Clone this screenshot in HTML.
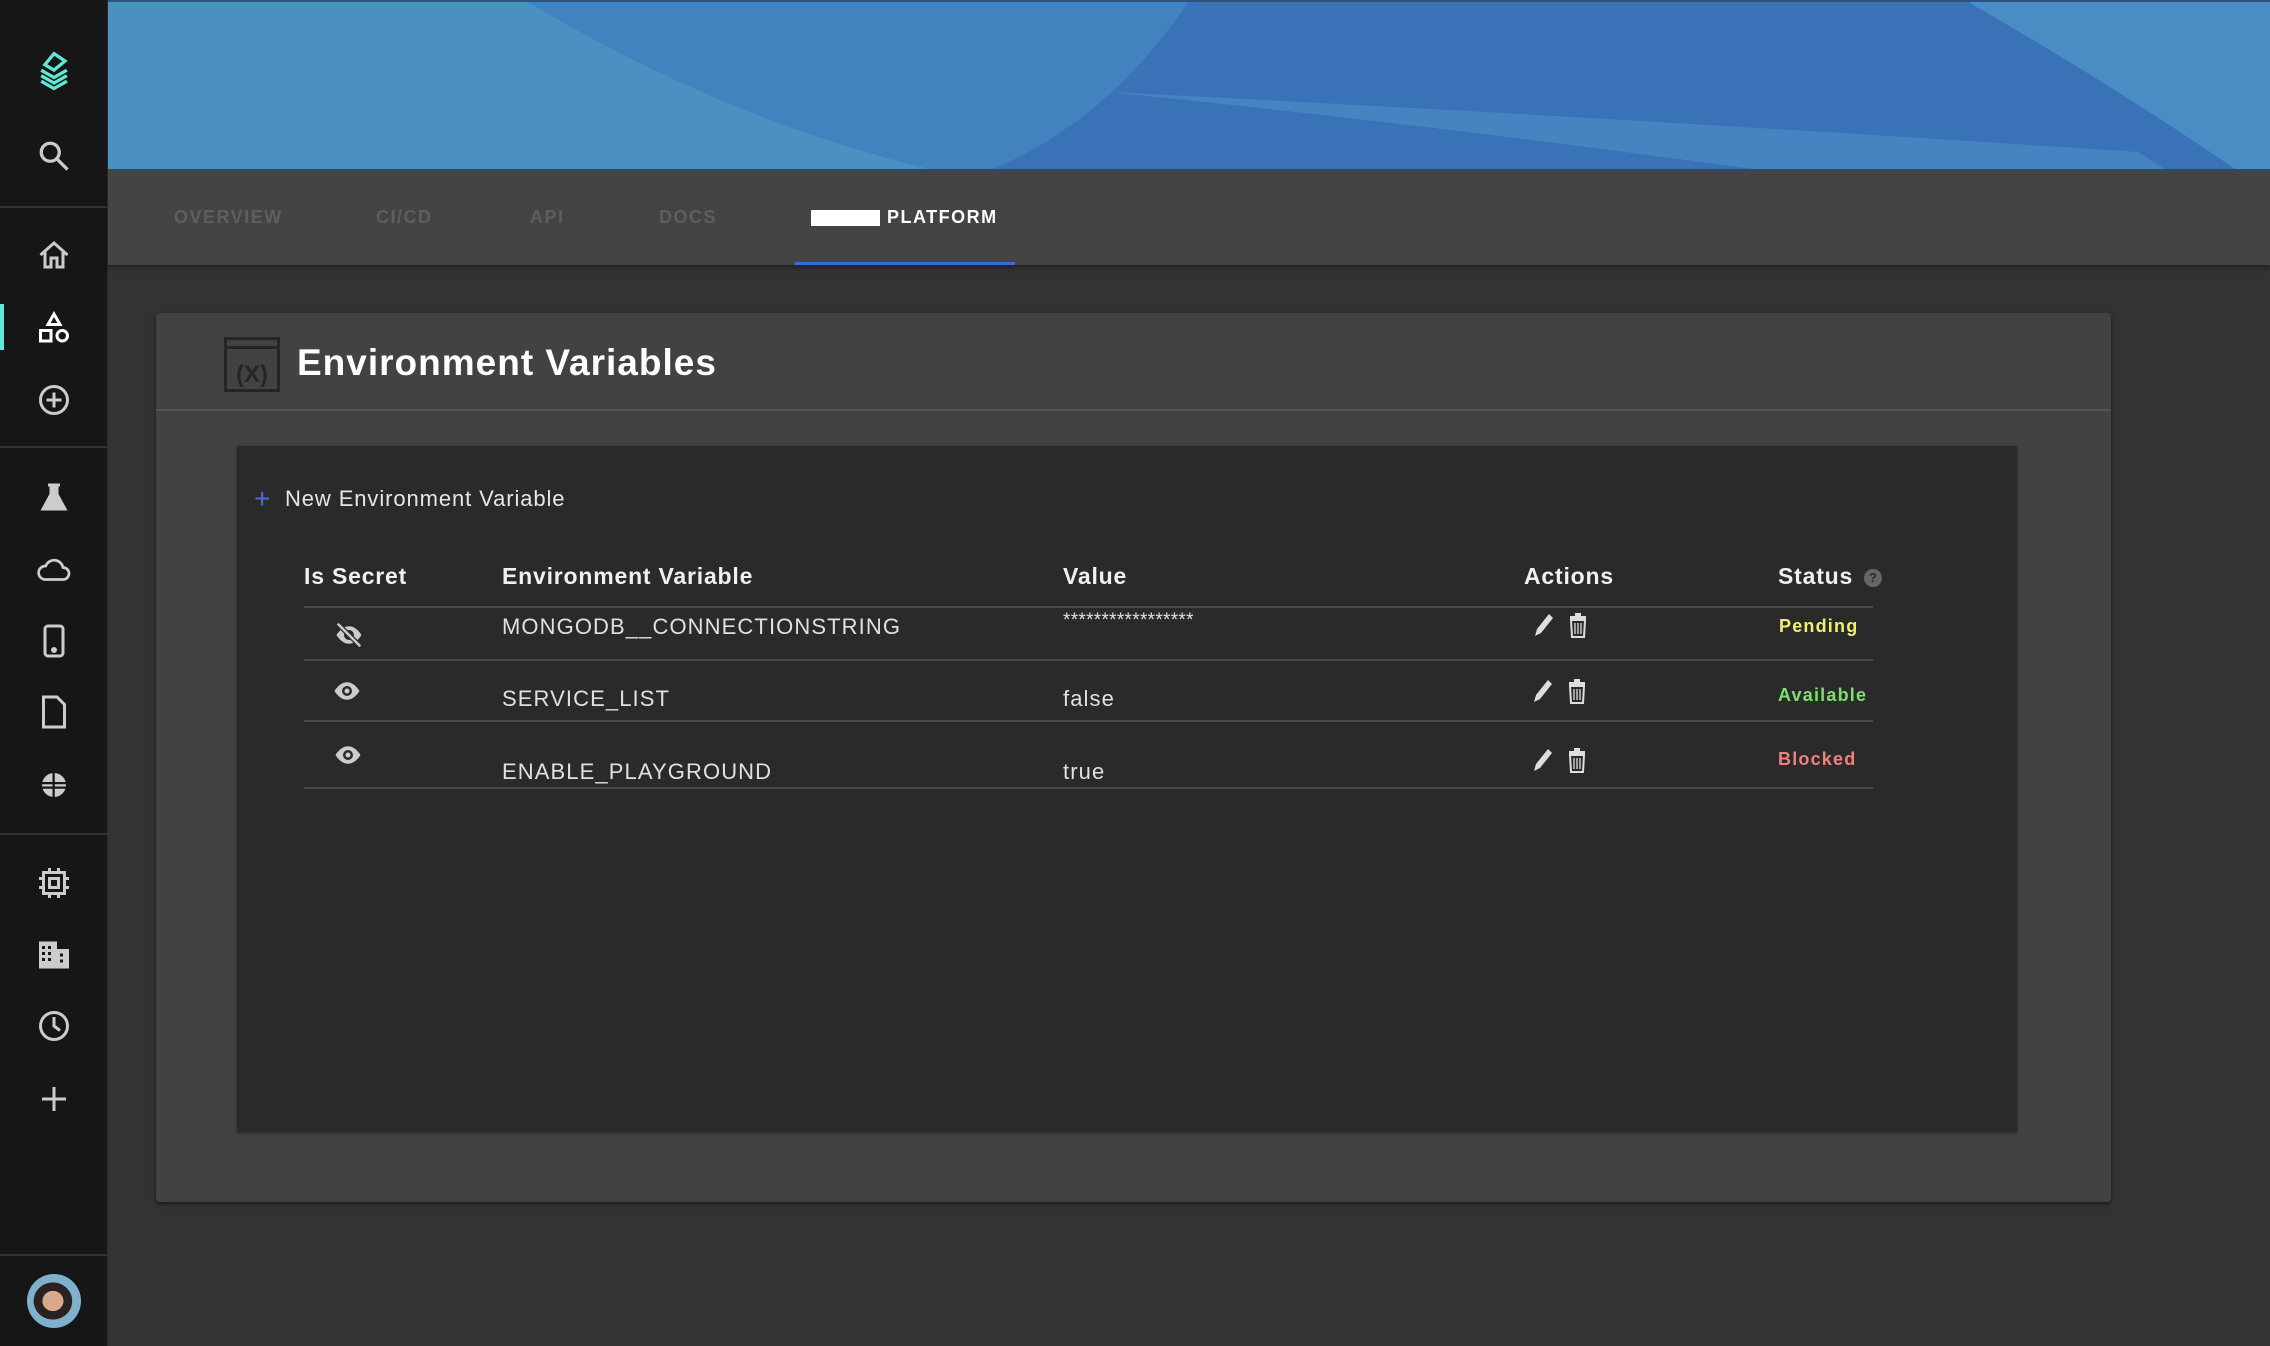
<!DOCTYPE html>
<html><head><meta charset="utf-8"><style>
*{margin:0;padding:0;box-sizing:border-box}
body{width:2270px;height:1346px;overflow:hidden;background:#333;font-family:"Liberation Sans",sans-serif;position:relative;color:#e6e6e6}
.side{position:absolute;left:0;top:0;width:108px;height:1346px;background:#161616;border-right:1px solid #2a2a2a}
.side .ln{position:absolute;left:0;width:108px;height:2px;background:#333}
.ic{position:absolute;left:36px;width:36px;height:36px}
.hdr{position:absolute;left:108px;top:0;width:2162px;height:169px;background:#4a8fc0;overflow:hidden;border-top:2px solid #3a5070}
.tabs{position:absolute;left:108px;top:169px;width:2162px;height:96px;background:#444;box-shadow:0 3px 4px rgba(0,0,0,.3)}
.tab{position:absolute;top:38px;font-size:18px;font-weight:bold;letter-spacing:1.5px;color:#5e5e5e}
.card{position:absolute;left:156px;top:313px;width:1955px;height:889px;background:#424242;border-radius:4px;box-shadow:0 2px 4px rgba(0,0,0,.5)}
.panel{position:absolute;left:81px;top:133px;width:1780px;height:686px;background:#2a2a2a;box-shadow:0 1px 3px rgba(0,0,0,.4)}
.t{position:absolute;white-space:nowrap}
.th{font-size:23px;font-weight:bold;color:#f0f0f0;letter-spacing:.8px}
.td{font-size:22px;color:#e0e0e0;letter-spacing:1.1px}
.hl{position:absolute;left:67px;width:1569px;height:2px;background:#4a4a4a}
</style></head><body>
<div class="side">
<svg class="ic" style="top:50px;left:32px;width:44px;height:44px" viewBox="0 0 24 24" fill="none" stroke="#5ee8d6" stroke-width="1.8"><path d="M12 2l6 4-6 5-5-3z"/><path d="M5 11l7 4 7-4M5 14l7 4 7-4M5 17l7 4 7-4"/></svg>
<svg class="ic" style="top:138px" viewBox="0 0 24 24" fill="none" stroke="#ccc" stroke-width="2.2"><circle cx="9.5" cy="9.5" r="6"/><path d="M14 14l7 7"/></svg>
<div class="ln" style="top:206px"></div>
<svg class="ic" style="top:237px" viewBox="0 0 24 24" fill="none" stroke="#ccc" stroke-width="2"><path d="M3 12l9-8 9 8M6 10v10h4v-6h4v6h4V10"/></svg>
<div style="position:absolute;left:0;top:304px;width:4px;height:46px;background:#5ee8d6"></div>
<svg class="ic" style="top:311px" viewBox="0 0 24 24" fill="none" stroke="#fff" stroke-width="2"><path d="M12 2l4 7H8z"/><rect x="3" y="13" width="7" height="7"/><circle cx="17.5" cy="16.5" r="3.5"/></svg>
<svg class="ic" style="top:382px" viewBox="0 0 24 24" fill="none" stroke="#ccc" stroke-width="2"><circle cx="12" cy="12" r="9"/><path d="M12 7v10M7 12h10"/></svg>
<div class="ln" style="top:446px"></div>
<svg class="ic" style="top:479px" viewBox="0 0 24 24" fill="#ccc"><path d="M8 3h8v2h-1v5l6 11H3l6-11V5H8z"/></svg>
<svg class="ic" style="top:551px" viewBox="0 0 24 24" fill="none" stroke="#ccc" stroke-width="1.8"><path d="M6 19h12a4 4 0 000-8 6 6 0 00-11.5-1A4.5 4.5 0 006 19z"/></svg>
<svg class="ic" style="top:623px" viewBox="0 0 24 24" fill="none" stroke="#ccc" stroke-width="2"><rect x="6" y="2" width="12" height="20" rx="2"/><circle cx="12" cy="18" r="1" fill="#ccc"/></svg>
<svg class="ic" style="top:694px" viewBox="0 0 24 24" fill="none" stroke="#ccc" stroke-width="2"><path d="M5 2h9l5 5v15H5z"/></svg>
<svg class="ic" style="top:767px" viewBox="0 0 24 24" fill="#ccc"><circle cx="12" cy="12" r="8"/><path d="M3 10h18v1.5H3zM3 13h18v1.5H3zM11 3h1.5v18H11z" fill="#161616"/></svg>
<div class="ln" style="top:833px"></div>
<svg class="ic" style="top:865px" viewBox="0 0 24 24" fill="none" stroke="#ccc" stroke-width="2"><rect x="5" y="5" width="14" height="14"/><rect x="9" y="9" width="6" height="6"/><path d="M9 2v3M15 2v3M9 19v3M15 19v3M2 9h3M2 15h3M19 9h3M19 15h3"/></svg>
<svg class="ic" style="top:937px" viewBox="0 0 24 24" fill="#ccc"><path d="M2 3h12v18H2zM14 8h8v13h-8z"/><path d="M4 6h2v2H4zM8 6h2v2H8zM4 10h2v2H4zM8 10h2v2H8zM4 14h2v2H4zM8 14h2v2H8zM16 11h2v2h-2zM16 15h2v2h-2z" fill="#161616"/></svg>
<svg class="ic" style="top:1008px" viewBox="0 0 24 24" fill="none" stroke="#ccc" stroke-width="2"><circle cx="12" cy="12" r="9"/><path d="M12 6v6l4 3"/></svg>
<svg class="ic" style="top:1081px" viewBox="0 0 24 24" fill="none" stroke="#ccc" stroke-width="2"><path d="M12 4v16M4 12h16"/></svg>
<div class="ln" style="top:1254px"></div>
<div style="position:absolute;left:27px;top:1274px;width:54px;height:54px;border-radius:50%;background:radial-gradient(ellipse at 48% 50%,#d9a98c 0 26%,#2a2220 27% 48%,#7fb0cc 49%)"></div>
</div>
<div class="hdr">
<svg width="2162" height="169" style="position:absolute;left:0;top:0">
<rect width="2162" height="169" fill="#4a90c0"/>
<path d="M420 0 Q620 120 830 169 L2162 169 L2162 0Z" fill="#4282bf"/>
<path d="M1080 0 Q1000 120 880 169 L2162 169 L2162 0Z" fill="#3a72b8"/>
<path d="M1000 90 Q1500 115 2030 150 L2060 169 L1660 169 Q1300 120 1000 90Z" fill="#4a88c3" opacity=".8"/>
<path d="M1860 0 L2162 0 L2162 169 L2130 169 Q2000 80 1860 0Z" fill="#4a8cc4"/>
</svg>
</div>
<div class="tabs">
<div class="tab" style="left:66px">OVERVIEW</div>
<div class="tab" style="left:268px">CI/CD</div>
<div class="tab" style="left:422px">API</div>
<div class="tab" style="left:551px">DOCS</div>
<div style="position:absolute;left:703px;top:41px;width:69px;height:16px;background:#fff"></div>
<div class="tab" style="left:779px;color:#fff">PLATFORM</div>
<div style="position:absolute;left:687px;top:93px;width:220px;height:3px;background:#3d6bd6"></div>
</div>
<div class="card">
<svg style="position:absolute;left:68px;top:24px" width="56" height="55" viewBox="0 0 56 55"><rect x="1.5" y="1.5" width="53" height="52" fill="none" stroke="#252525" stroke-width="3"/><rect x="3" y="9" width="50" height="3" fill="#252525"/><text x="28" y="45" font-family="Liberation Sans" font-weight="bold" font-size="24" fill="#252525" text-anchor="middle">(X)</text></svg>
<div class="t" style="left:141px;top:29px;font-size:37px;font-weight:bold;color:#fff;letter-spacing:1px">Environment Variables</div>
<div style="position:absolute;left:0;top:96px;width:1955px;height:2px;background:#555"></div>
<div class="panel">
<div class="t" style="left:17px;top:37px;font-size:28px;color:#4a6fe0">+</div>
<div class="t" style="left:48px;top:40px;font-size:22px;color:#e6e6e6;letter-spacing:.9px">New Environment Variable</div>
<div class="t th" style="left:67px;top:117px">Is Secret</div>
<div class="t th" style="left:265px;top:117px">Environment Variable</div>
<div class="t th" style="left:826px;top:117px">Value</div>
<div class="t th" style="left:1287px;top:117px">Actions</div>
<div class="t th" style="left:1541px;top:117px">Status</div>
<div style="position:absolute;left:1627px;top:123px;width:18px;height:18px;border-radius:50%;background:#666;color:#2a2a2a;font-size:13px;font-weight:bold;text-align:center;line-height:18px">?</div>
<div class="hl" style="top:160px"></div>
<div class="hl" style="top:213px"></div>
<div class="hl" style="top:274px"></div>
<div class="hl" style="top:341px"></div>
<svg style="position:absolute;left:95px;top:174px" width="34" height="30" viewBox="0 0 24 24" fill="#ccc"><path d="M12 5C6 5 2 12 2 12s4 7 10 7 10-7 10-7-4-7-10-7zm0 11a4 4 0 110-8 4 4 0 010 8z"/><path d="M3 3l18 18" stroke="#2a2a2a" stroke-width="4"/><path d="M3 3l18 18" stroke="#ccc" stroke-width="2"/></svg>
<div class="t td" style="left:265px;top:168px">MONGODB__CONNECTIONSTRING</div>
<div class="t td" style="left:826px;top:164px;font-size:19px;letter-spacing:.3px">*****************</div>
<div class="t" style="left:1542px;top:170px;font-size:18px;font-weight:bold;color:#f0f06a;letter-spacing:1.2px">Pending</div>
<svg style="position:absolute;left:93px;top:230px" width="34" height="30" viewBox="0 0 24 24" fill="#ccc"><path d="M12 5C6 5 2 12 2 12s4 7 10 7 10-7 10-7-4-7-10-7zm0 11a4 4 0 110-8 4 4 0 010 8zm0-6a2 2 0 100 4 2 2 0 000-4z"/></svg>
<div class="t td" style="left:265px;top:240px">SERVICE_LIST</div>
<div class="t td" style="left:826px;top:240px">false</div>
<div class="t" style="left:1541px;top:239px;font-size:18px;font-weight:bold;color:#7ee06a;letter-spacing:1.2px">Available</div>
<svg style="position:absolute;left:94px;top:294px" width="34" height="30" viewBox="0 0 24 24" fill="#ccc"><path d="M12 5C6 5 2 12 2 12s4 7 10 7 10-7 10-7-4-7-10-7zm0 11a4 4 0 110-8 4 4 0 010 8zm0-6a2 2 0 100 4 2 2 0 000-4z"/></svg>
<div class="t td" style="left:265px;top:313px">ENABLE_PLAYGROUND</div>
<div class="t td" style="left:826px;top:313px">true</div>
<div class="t" style="left:1541px;top:303px;font-size:18px;font-weight:bold;color:#f08080;letter-spacing:1.2px">Blocked</div>
<svg style="position:absolute;left:1295px;top:165px" width="60" height="28" viewBox="0 0 60 28"><path d="M3 25l2-7L17 3l4 4L9 22z" fill="#ddd"/><rect x="38" y="5" width="16" height="3" fill="#ddd"/><rect x="43" y="2" width="6" height="3" fill="#ddd"/><path d="M39 9h14l-1 17H40z" fill="none" stroke="#ddd" stroke-width="2"/><path d="M43 12v11M46 12v11M49 12v11" stroke="#ddd" stroke-width="1.3"/></svg>
<svg style="position:absolute;left:1294px;top:231px" width="60" height="28" viewBox="0 0 60 28"><path d="M3 25l2-7L17 3l4 4L9 22z" fill="#ddd"/><rect x="38" y="5" width="16" height="3" fill="#ddd"/><rect x="43" y="2" width="6" height="3" fill="#ddd"/><path d="M39 9h14l-1 17H40z" fill="none" stroke="#ddd" stroke-width="2"/><path d="M43 12v11M46 12v11M49 12v11" stroke="#ddd" stroke-width="1.3"/></svg>
<svg style="position:absolute;left:1294px;top:300px" width="60" height="28" viewBox="0 0 60 28"><path d="M3 25l2-7L17 3l4 4L9 22z" fill="#ddd"/><rect x="38" y="5" width="16" height="3" fill="#ddd"/><rect x="43" y="2" width="6" height="3" fill="#ddd"/><path d="M39 9h14l-1 17H40z" fill="none" stroke="#ddd" stroke-width="2"/><path d="M43 12v11M46 12v11M49 12v11" stroke="#ddd" stroke-width="1.3"/></svg>
</div>
</div>
</body></html>
